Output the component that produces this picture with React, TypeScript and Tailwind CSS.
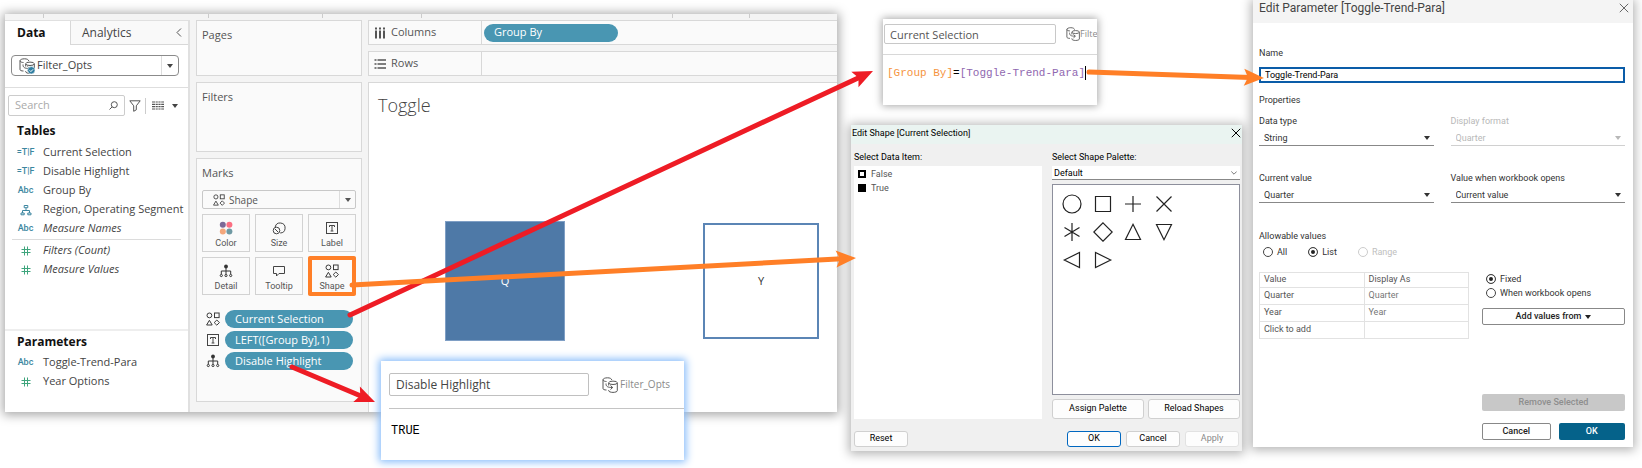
import React from "react";

type IconProps = { className?: string };

const Caret = ({ className = "" }: IconProps) => (
  <svg viewBox="0 0 6 4" className={`h-1 w-1.5 shrink-0 ${className}`} fill="currentColor" aria-hidden="true">
    <path d="M0 0h6L3 4z" />
  </svg>
);

const DataSourceIcon = ({ className = "", checked = false }: IconProps & { checked?: boolean }) => (
  <svg viewBox="0 0 16 16" className={`shrink-0 ${className}`} fill="none" stroke="#555" strokeWidth="1" aria-hidden="true">
    <path d="M4.500 13C2.500 13 1 12.500 1 11.500V2.800C1 1.600 3 .8 5.500.8S9.500 1.600 9.800 3M1 2.800C1.200 4 3 4.500 4.500 4.500" />
    <ellipse cx="11" cy="5.800" rx="4.300" ry="1.700" />
    <path d="M6.700 6v2.500M15.300 6v7.700c0 .9-1.900 1.700-4.300 1.700s-4.300-.8-4.300-1.700V13M4 6.500c0 3 1.500 4 6.500 4M8.500 8.500l2.200 2-2.200 2" />
    {checked && (
      <>
        <circle cx="12.300" cy="12.300" r="3.700" fill="#2f7ea1" stroke="#fff" strokeWidth=".6" />
        <path d="M10.600 12.300l1.300 1.300 2.200-2.300" stroke="#fff" />
      </>
    )}
  </svg>
);

const ShapesIcon = ({ className = "h-3.5 w-3.5" }: IconProps) => (
  <svg viewBox="0 0 14 14" className={`shrink-0 ${className}`} fill="none" stroke="#3a3a3a" strokeWidth="1" aria-hidden="true">
    <circle cx="3.400" cy="3.400" r="2.400" />
    <rect x="8.500" y="1" width="4.600" height="4.600" />
    <path d="M3.400 8.300L6.200 13H.6zM10.800 8l2.600 2.600-2.600 2.600-2.600-2.600z" />
  </svg>
);

const LabelIcon = ({ className = "h-3.5 w-3.5" }: IconProps) => (
  <svg viewBox="0 0 14 14" className={`shrink-0 ${className}`} fill="none" stroke="#444" aria-hidden="true">
    <rect x="1.500" y="1.500" width="11" height="11" strokeWidth="1" />
    <path d="M4.500 6V4.500h5V6M7 4.500v5.500M5.600 10h2.800" strokeWidth="1" />
  </svg>
);

const DetailIcon = ({ className = "h-3.5 w-3.5" }: IconProps) => (
  <svg viewBox="0 0 14 14" className={`shrink-0 ${className}`} fill="none" stroke="#333" aria-hidden="true">
    <circle cx="7" cy="2.500" r="1.900" fill="#333" stroke="none" />
    <path d="M7 4v6M2.300 10V7h9.400v3" />
    <circle cx="2.300" cy="11.500" r="1.100" />
    <circle cx="7" cy="11.500" r="1.100" />
    <circle cx="11.700" cy="11.500" r="1.100" />
  </svg>
);

const ColorIcon = () => (
  <svg viewBox="0 0 14 14" className="h-3.5 w-3.5" aria-hidden="true">
    <circle cx="3.800" cy="3.800" r="3" fill="#7b6a97" />
    <circle cx="10.400" cy="3.800" r="3" fill="#fb6f82" />
    <circle cx="3.800" cy="10.400" r="3" fill="#f4a77c" />
    <circle cx="10.400" cy="10.400" r="3" fill="#6f99a3" />
  </svg>
);

const SizeIcon = () => (
  <svg viewBox="0 0 14 14" className="h-3.5 w-3.5" fill="none" stroke="#444" aria-hidden="true">
    <path d="M3.200 6a5 5 0 1 1 5 6" />
    <circle cx="4.500" cy="9.500" r="3.300" />
    <path d="M3 8l3 3" />
  </svg>
);

const TooltipIcon = () => (
  <svg viewBox="0 0 14 14" className="h-3.5 w-3.5" fill="none" stroke="#444" aria-hidden="true">
    <path d="M1.500 2.500h11v7H7L4.500 12V9.500h-3z" />
  </svg>
);

const HierarchyIcon = () => (
  <svg viewBox="0 0 12 12" className="h-3 w-3" fill="none" stroke="#3c86a0" aria-hidden="true">
    <path d="M4.200 1.500h3.600v2.200H4.200zM6 4v2.500M2.500 9V6.500h7V9M1 9h3.200v1.800H1zM7.800 9H11v1.800H7.800z" />
  </svg>
);

const HashIcon = () => (
  <svg viewBox="0 0 10 10" className="h-2.5 w-2.5" fill="none" stroke="#3fa57d" aria-hidden="true">
    <path d="M3.500.5v9M6.500.5v9M.5 3.500h9M.5 6.500h9" />
  </svg>
);

const CloseIcon = ({ className = "" }: IconProps) => (
  <svg viewBox="0 0 9 9" className={`h-2.5 w-2.5 ${className}`} fill="none" stroke="currentColor" strokeWidth=".9" aria-hidden="true">
    <path d="M.7.7l7.600 7.600M8.300.7L.7 8.300" />
  </svg>
);

type Kind = "bool" | "abc" | "tree" | "num";

const Field = ({ kind, name, italic }: { kind: Kind; name: string; italic?: boolean }) => (
  <li className="flex h-[19px] items-center whitespace-nowrap">
    <span className="flex w-[19px] justify-center font-[Roboto,sans-serif] text-[9px] font-medium text-[#3c86a0]">
      {kind === "bool" && "=T|F"}
      {kind === "abc" && "Abc"}
      {kind === "tree" && <HierarchyIcon />}
      {kind === "num" && <HashIcon />}
    </span>
    <span className={italic ? "ml-2 italic" : "ml-2"}>{name}</span>
  </li>
);

const DataPane = () => (
  <aside className="flex w-[185px] shrink-0 flex-col border-t border-r-2 border-[#e0e0e0] bg-white text-[11px] text-[#444]">
    <div className="flex h-6 text-[12px]">
      <button className="w-[65px] pr-3.5 pl-3 text-left text-[12px] font-bold text-[#111]">Data</button>
      <div className="flex flex-1 items-center justify-between border-b border-l border-[#d8d8d8] bg-[#f9f9f9] pr-1.5 pl-[11px]">
        <button>Analytics</button>
        <button aria-label="Collapse pane">
          <svg viewBox="0 0 6 9" className="h-[9px] w-1.5" fill="none" stroke="#555" aria-hidden="true">
            <path d="M5 .5l-4 4 4 4" />
          </svg>
        </button>
      </div>
    </div>
    <div className="border-b border-[#dedede] px-1.5 pt-2.5 pb-[11px]">
      <button className="flex h-[21px] w-[168px] items-center rounded-sm border border-[#8b8b8b] pl-[7px]">
        <DataSourceIcon checked className="h-4 w-4" />
        <span className="ml-0.5 flex-1 text-left">Filter_Opts</span>
        <span className="flex h-full w-[17px] items-center justify-center border-l border-[#ddd]">
          <Caret />
        </span>
      </button>
    </div>
    <div className="flex items-center pt-[7px] pl-[3px]">
      <label className="flex h-[21px] w-[117px] items-center rounded-xs border border-[#ccc] px-1.5">
        <input aria-label="Search" placeholder="Search" className="w-20 flex-1 outline-none placeholder:text-[#aaa]" />
        <svg viewBox="0 0 9 9" className="h-[9px] w-[9px]" fill="none" stroke="#555" aria-hidden="true">
          <circle cx="5.300" cy="3.700" r="3" />
          <path d="M3.100 5.900L.5 8.500" />
        </svg>
      </label>
      <button aria-label="Filter" className="ml-1">
        <svg viewBox="0 0 12 12" className="h-3 w-3" fill="none" stroke="#555" aria-hidden="true">
          <path d="M.8.8h10.400L7.300 5.800v4L4.700 11.300V5.800z" />
        </svg>
      </button>
      <span className="ml-1 h-4 w-px bg-[#ccc]" />
      <button aria-label="View options" className="flex items-center">
        <svg viewBox="0 0 12 9" className="mx-1.5 h-[9px] w-3" stroke="#555" strokeWidth="1.200" aria-hidden="true">
          <path d="M0 1h12M0 3.300h12M0 5.700h12M0 8h12" strokeDasharray="3 .6 2.200 .6 2.200 .6 2.800" />
        </svg>
        <Caret className="ml-0.5" />
      </button>
    </div>
    <h2 className="mt-1.5 pl-3 text-[12px] leading-[18px] font-bold text-[#111]">Tables</h2>
    <ul className="mt-[3px] pl-[11px]">
      <Field kind="bool" name="Current Selection" />
      <Field kind="bool" name="Disable Highlight" />
      <Field kind="abc" name="Group By" />
      <Field kind="tree" name="Region, Operating Segment" />
      <Field kind="abc" name="Measure Names" italic />
    </ul>
    <div className="mx-[7px] my-px border-t border-[#dcdcdc]" />
    <ul className="pl-[11px]">
      <Field kind="num" name="Filters (Count)" italic />
      <Field kind="num" name="Measure Values" italic />
    </ul>
    <div className="mt-auto border-t-2 border-[#eee] pb-[21px]">
      <h2 className="pt-0.5 pl-3 text-[12px] leading-[18px] font-bold text-[#111]">Parameters</h2>
      <ul className="mt-0.5 pl-[11px]">
        <Field kind="abc" name="Toggle-Trend-Para" />
        <Field kind="num" name="Year Options" />
      </ul>
    </div>
  </aside>
);

const MarkButton = ({ label, icon, highlight }: { label: string; icon: React.ReactNode; highlight?: boolean }) => (
  <button className="relative flex h-[38px] flex-col items-center justify-between border border-[#d2d2d2] bg-[#fafafa] pt-1.5 pb-0.5 font-[Roboto,sans-serif] text-[9px] leading-[11px] text-[#555]">
    {icon}
    <span>{label}</span>
    {highlight && <span className="absolute -inset-x-px -inset-y-0.5 rounded-xs border-4 border-[#ff7f27]" />}
  </button>
);

const Pill = ({ icon, label }: { icon: React.ReactNode; label: string }) => (
  <div className="flex h-[19px] items-center gap-1">
    <span className="flex w-[18px] justify-end">{icon}</span>
    <button className="ml-px h-[18px] flex-1 rounded-full bg-[#4996b2] pl-2.5 text-left text-[11px] font-medium text-white">
      {label}
    </button>
  </div>
);

const MarksColumn = () => (
  <section className="flex w-[166px] shrink-0 flex-col gap-1.5 text-[11px] leading-[14px] text-[#555]">
    <div className="h-14 border border-[#d8d8d8] bg-[#fafafa] px-[5px] py-[7px]">Pages</div>
    <div className="h-[70px] border border-[#d8d8d8] bg-[#fafafa] px-[5px] py-[7px]">Filters</div>
    <div className="mb-2.5 flex-1 border border-[#d8d8d8] bg-[#fafafa] px-[5px] py-[7px]">
      <h3>Marks</h3>
      <button className="mt-2.5 flex h-[19px] w-full items-center rounded-xs border border-[#c8c8c8] pl-2.5">
        <ShapesIcon className="h-3 w-3" />
        <span className="ml-1 flex-1 text-left text-[10px]">Shape</span>
        <span className="flex h-full w-4 items-center justify-center border-l border-[#ddd]">
          <Caret />
        </span>
      </button>
      <div className="mt-[5px] grid grid-cols-3 gap-[5px]">
        <MarkButton label="Color" icon={<ColorIcon />} />
        <MarkButton label="Size" icon={<SizeIcon />} />
        <MarkButton label="Label" icon={<LabelIcon />} />
        <MarkButton label="Detail" icon={<DetailIcon />} />
        <MarkButton label="Tooltip" icon={<TooltipIcon />} />
        <MarkButton label="Shape" icon={<ShapesIcon />} highlight />
      </div>
      <div className="mt-3.5 flex flex-col gap-0.5 pr-[3px]">
        <Pill icon={<ShapesIcon />} label="Current Selection" />
        <Pill icon={<LabelIcon />} label="LEFT([Group By],1)" />
        <Pill icon={<DetailIcon />} label="Disable Highlight" />
      </div>
    </div>
  </section>
);

const Shelf = ({ icon, label, children }: { icon: React.ReactNode; label: string; children?: React.ReactNode }) => (
  <div className="flex h-[25px] border-y border-l border-[#d8d8d8] bg-[#fafafa]">
    <div className="flex w-[113px] items-center gap-[5px] border-r border-[#d8d8d8] pl-[5px] text-[11px] text-[#555]">
      {icon}
      {label}
    </div>
    <div className="flex flex-1 items-center pl-0.5">{children}</div>
  </div>
);

const Worksheet = () => (
  <section className="flex min-w-0 flex-1 flex-col gap-1.5">
    <Shelf
      label="Columns"
      icon={
        <svg viewBox="0 0 12 12" className="h-3 w-3" stroke="#555" strokeWidth="2" aria-hidden="true">
          <path d="M2 .5v2M6 .5v2M10 .5v2M2 3.500v8M6 3.500v8M10 3.500v8" />
        </svg>
      }
    >
      <button className="h-[18px] w-[134px] rounded-full bg-[#4996b2] pl-2.5 text-left text-[11px] font-medium text-white">Group By</button>
    </Shelf>
    <Shelf
      label="Rows"
      icon={
        <svg viewBox="0 0 12 12" className="h-3 w-3" stroke="#555" strokeWidth="1.600" aria-hidden="true">
          <path d="M.5 2h2M.5 6h2M.5 10h2M3.500 2h8.500M3.500 6h8.500M3.500 10h8.500" />
        </svg>
      }
    />
    <div className="flex flex-1 flex-col border-t border-l border-[#d8d8d8] bg-white">
      <h1 className="pt-2.5 pl-[9px] text-[18px] leading-6 font-light text-[#444]">Toggle</h1>
      <div className="mt-[104px] flex items-center justify-between pr-[18px] pl-[76px] text-[11px]">
        <div className="flex h-[120px] w-[120px] items-center justify-center border border-[#7f9fc5] bg-[#4e79a7] text-white">Q</div>
        <div className="flex h-[116px] w-[116px] items-center justify-center border-2 border-[#5b85b5] text-[#333]">Y</div>
      </div>
    </div>
  </section>
);

const CalcCard = () => (
  <div className="absolute top-[347px] left-[376px] h-[99px] w-[303px] bg-white pt-3 pl-2 shadow-[0_0_8px_2px_#85bbfa]">
    <div className="flex items-center">
      <input
        aria-label="Calculation name"
        defaultValue="Disable Highlight"
        className="h-[23px] w-[200px] rounded-xs border border-[#c0c0c0] px-1.5 text-[12px] text-[#444] outline-none"
      />
      <DataSourceIcon className="ml-[13px] h-4 w-4" />
      <span className="ml-0.5 text-[10px] text-[#8a8a8a]">Filter_Opts</span>
    </div>
    <div className="mt-3 border-t border-[#c4c4c4]" />
    <code className="mt-3.5 block pl-0.5 font-['Liberation_Mono',monospace] text-[12px] leading-4 text-black">TRUE</code>
  </div>
);

const Workbook = () => (
  <main className="relative mt-3.5 h-[398px] bg-[#f4f4f4] font-['Open_Sans',sans-serif] shadow-[0_1px_10px_2px_rgba(0,0,0,0.35)]">
    <div className="flex h-full flex-col">
      <div className="flex h-1.5 shrink-0 pl-[38px]">
        <span className="h-1 w-[165px] border-l border-[#ccc]" />
        <span className="h-1 w-[114px] border-l border-[#ccc]" />
        <span className="h-1 w-[99px] border-l border-[#ccc]" />
        <span className="h-1 w-[251px] border-l border-[#ccc]" />
        <span className="h-1 w-[78px] border-x border-[#ccc]" />
      </div>
      <div className="flex min-h-0 flex-1 gap-1.5">
        <DataPane />
        <MarksColumn />
        <Worksheet />
      </div>
    </div>
    <CalcCard />
  </main>
);

const FormulaCard = () => (
  <section className="ml-8 h-[86px] w-[214px] overflow-hidden bg-white font-['Open_Sans',sans-serif] shadow-[0_0_8px_1px_rgba(0,0,0,0.35)]">
    <div className="flex h-[30px] items-center pl-px whitespace-nowrap">
      <input
        aria-label="Field name"
        defaultValue="Current Selection"
        className="h-5 w-[172px] shrink-0 rounded-xs border border-[#c8c8c8] px-[5px] text-[11px] text-[#555] outline-none"
      />
      <DataSourceIcon className="ml-2.5 h-3.5 w-3.5" />
      <span className="text-[9px] text-[#8a8a8a]">Filte</span>
    </div>
    <div className="mt-[5px] border-t border-[#d8d8d8]" />
    <code className="mt-2.5 flex items-center pl-1 font-['Liberation_Mono',monospace] text-[11px] leading-4 whitespace-nowrap">
      <span className="text-[#f59440]">[Group By]</span>
      <span className="text-black">=</span>
      <span className="text-[#9068b0]">[Toggle-Trend-Para]</span>
      <span className="h-3.5 w-px bg-black" />
    </code>
  </section>
);

const paletteShapes = [
  { name: "Circle", d: "M10 1a9 9 0 1 0 0 18a9 9 0 1 0 0-18z" },
  { name: "Square", d: "M2.500 2.500h15v15h-15z" },
  { name: "Plus", d: "M10 2v16M2 10h16" },
  { name: "Cross", d: "M2.500 2.500l15 15M17.500 2.500l-15 15" },
  { name: "Asterisk", d: "M10 1v18M2.500 5.500l15 9M17.500 5.500l-15 9" },
  { name: "Diamond", d: "M10 .8L19.200 10 10 19.200.8 10z" },
  { name: "Triangle up", d: "M10 2.300L17.500 17.500h-15z" },
  { name: "Triangle down", d: "M10 17.700L2.500 2.500h15z" },
  { name: "Triangle left", d: "M2.300 10l15.200-7.500v15z" },
  { name: "Triangle right", d: "M17.700 10L2.500 2.500v15z" },
];

const DialogButton = ({ children, className }: { children: string; className: string }) => (
  <button className={`rounded-[3px] border bg-[#fdfdfd] ${className}`}>{children}</button>
);

const ShapeDialog = () => (
  <section className="flex h-[326px] flex-col bg-[#f0f0f0] text-[9px] text-black shadow-[0_1px_10px_2px_rgba(0,0,0,0.3)]">
    <header className="flex h-[19px] items-start justify-between bg-[#eaf4f1] pr-px pl-px leading-4">
      <h2>Edit Shape [Current Selection]</h2>
      <button aria-label="Close" className="pt-[3px]">
        <CloseIcon />
      </button>
    </header>
    <div className="flex flex-1 gap-2.5 pr-0.5 pl-[3px]">
      <div className="flex flex-1 flex-col">
        <h3 className="pt-[7px] pb-[3px] leading-3">Select Data Item:</h3>
        <ul className="flex-1 bg-white pt-px pl-1 leading-[14px] text-[#555]">
          <li className="flex items-center gap-[5px]">
            <span className="h-2 w-2 border-2 border-black" />
            False
          </li>
          <li className="flex items-center gap-[5px]">
            <span className="h-2 w-2 bg-black" />
            True
          </li>
        </ul>
      </div>
      <div className="flex flex-1 flex-col">
        <label htmlFor="palette" className="pt-[7px] pb-[3px] leading-3">
          Select Shape Palette:
        </label>
        <div className="relative flex h-3.5">
          <select id="palette" className="w-full appearance-none border-b border-[#888] bg-white px-0.5 leading-3 outline-none">
            <option>Default</option>
          </select>
          <svg viewBox="0 0 6 4" className="absolute top-[5px] right-[3px] h-1 w-1.5" fill="none" stroke="#555" strokeWidth=".8" aria-hidden="true">
            <path d="M.3.5L3 3.200 5.700.5" />
          </svg>
        </div>
        <div className="mt-1 flex-1 border border-[#8d8f9c] bg-white pt-[9px] pl-[9px]">
          <div className="grid w-[122px] grid-cols-4 gap-y-2">
            {paletteShapes.map((s) => (
              <button key={s.name} aria-label={s.name} className="h-5">
                <svg viewBox="0 0 20 20" className="h-5 w-5" fill="none" stroke="#222" strokeWidth="1.200" aria-hidden="true">
                  <path d={s.d} />
                </svg>
              </button>
            ))}
          </div>
        </div>
        <div className="mt-1 flex h-5 gap-1">
          <DialogButton className="flex-1 border-[#d0d0d0]">Assign Palette</DialogButton>
          <DialogButton className="flex-1 border-[#d0d0d0]">Reload Shapes</DialogButton>
        </div>
      </div>
    </div>
    <footer className="flex h-8 items-end gap-[5px] pr-[3px] pb-1 pl-[3px]">
      <DialogButton className="mr-auto h-4 w-[54px] border-[#d0d0d0]">Reset</DialogButton>
      <DialogButton className="h-4 w-[54px] border-[#0067c0]">OK</DialogButton>
      <DialogButton className="h-4 w-[54px] border-[#d0d0d0]">Cancel</DialogButton>
      <DialogButton className="h-4 w-[54px] border-[#e2e2e2] text-[#8a8a8a]">Apply</DialogButton>
    </footer>
  </section>
);

const LabeledSelect = ({ id, label, value, disabled }: { id: string; label: string; value: string; disabled?: boolean }) => (
  <div className={disabled ? "text-[#b8b8b8]" : "text-[#333]"}>
    <label htmlFor={id} className="block leading-3">
      {label}
    </label>
    <div className="relative mt-[3px]">
      <select
        id={id}
        disabled={disabled}
        className={`block h-4 w-full appearance-none border-b px-[5px] leading-3 outline-none disabled:opacity-100 ${disabled ? "border-[#d0d0d0]" : "border-[#888]"}`}
      >
        <option>{value}</option>
      </select>
      <Caret className="absolute top-1.5 right-1" />
    </div>
  </div>
);

const Radio = ({ name, label, checked, disabled }: { name: string; label: string; checked?: boolean; disabled?: boolean }) => (
  <label className={`flex items-center gap-1 leading-[14px] ${disabled ? "text-[#c0c0c0]" : "text-[#333]"}`}>
    <input
      type="radio"
      name={name}
      defaultChecked={checked}
      disabled={disabled}
      className="h-2.5 w-2.5 appearance-none rounded-full border border-[#444] checked:bg-[#222] checked:shadow-[inset_0_0_0_2px_#fff] disabled:border-[#ccc]"
    />
    {label}
  </label>
);

const rows = [
  { value: "Quarter", display: "Quarter" },
  { value: "Year", display: "Year" },
  { value: "Click to add", display: "" },
];

const ParameterDialog = () => (
  <section className="flex h-[447px] flex-col bg-white text-[9px] text-[#333] shadow-[0_1px_10px_2px_rgba(0,0,0,0.3)]">
    <header className="flex h-[23px] items-start justify-between bg-[#f4f4f4] pr-1 pl-1.5 text-[12px] leading-4 text-[#444]">
      <h2>Edit Parameter [Toggle-Trend-Para]</h2>
      <button aria-label="Close" className="pt-[3px] text-[#666]">
        <CloseIcon />
      </button>
    </header>
    <div className="flex flex-1 flex-col pr-2 pb-[7px] pl-1.5">
      <label htmlFor="name" className="mt-6 leading-3">
        Name
      </label>
      <input id="name" defaultValue="Toggle-Trend-Para" className="mt-2 h-4 border-2 border-[#0a5ca8] px-1 text-black outline-none" />
      <h3 className="mt-[11px] leading-3">Properties</h3>
      <div className="mt-[9px] grid grid-cols-2 gap-x-[17px] gap-y-[26px]">
        <LabeledSelect id="type" label="Data type" value="String" />
        <LabeledSelect id="format" label="Display format" value="Quarter" disabled />
        <LabeledSelect id="current" label="Current value" value="Quarter" />
        <LabeledSelect id="opens" label="Value when workbook opens" value="Current value" />
      </div>
      <fieldset className="mt-[27px]">
        <legend className="leading-3">Allowable values</legend>
        <div className="mt-[3px] flex gap-[21px] pl-1">
          <Radio name="allow" label="All" />
          <Radio name="allow" label="List" checked />
          <Radio name="allow" label="Range" disabled />
        </div>
      </fieldset>
      <div className="mt-[13px] flex flex-1 gap-[13px]">
        <table className="h-[67px] w-[210px] table-fixed self-start border-collapse text-left text-[#555]">
          <thead>
            <tr className="border-b border-[#ccc]">
              <th className="border border-[#e2e2e2] px-1 font-normal">Value</th>
              <th className="border border-[#e2e2e2] px-1 font-normal">Display As</th>
            </tr>
          </thead>
          <tbody>
            {rows.map((r) => (
              <tr key={r.value}>
                <td className="border border-[#e2e2e2] px-1">{r.value}</td>
                <td className="border border-[#e2e2e2] px-1 text-[#777]">{r.display}</td>
              </tr>
            ))}
          </tbody>
        </table>
        <div className="flex flex-1 flex-col">
          <div className="pl-1">
            <Radio name="refresh" label="Fixed" checked />
            <Radio name="refresh" label="When workbook opens" />
          </div>
          <button className="mt-2 flex h-[17px] items-center justify-center gap-1 rounded-xs border border-[#888] font-medium text-[#222]">
            Add values from <Caret />
          </button>
          <button disabled className="mt-auto h-[17px] rounded-xs bg-[#c8c8c8] font-medium text-[#8e8e8e]">
            Remove Selected
          </button>
          <div className="mt-3 flex h-[17px] gap-2 font-medium">
            <button className="flex-1 rounded-xs border border-[#888] text-[#222]">Cancel</button>
            <button className="flex-1 rounded-xs bg-[#05628a] text-white">OK</button>
          </div>
        </div>
      </div>
    </div>
  </section>
);

const arrows = [
  { from: [350, 315], to: [873, 71], color: "#ee1c25" },
  { from: [292, 367], to: [375, 402], color: "#ee1c25" },
  { from: [352, 285], to: [856, 258], color: "#ff7f27" },
  { from: [1089, 72], to: [1264, 78], color: "#ff7f27" },
];

const Arrows = () => (
  <svg
    viewBox="0 0 1642 468"
    preserveAspectRatio="none"
    className="pointer-events-none absolute inset-x-0 top-0 h-[468px] w-full"
    aria-hidden="true"
  >
    {arrows.map(({ from: [x1, y1], to: [x2, y2], color }) => {
      const length = Math.hypot(x2 - x1, y2 - y1);
      const angle = (Math.atan2(y2 - y1, x2 - x1) * 180) / Math.PI;
      return (
        <g key={`${x1}-${y1}`} transform={`translate(${x1} ${y1}) rotate(${angle})`} fill={color} stroke={color}>
          <path d={`M0 0H${length - 14}`} strokeWidth="5" strokeLinecap="round" />
          <path d={`M${length} 0L${length - 20} 8.500L${length - 16} 0L${length - 20} -8.500z`} stroke="none" />
        </g>
      );
    })}
  </svg>
);

export default function App() {
  return (
    <div className="relative min-h-[468px] overflow-hidden bg-white font-[Roboto,'Liberation_Sans',sans-serif]">
      <div className="grid grid-cols-[832fr_405fr_391fr] items-start pr-[9px] pl-[5px]">
        <div className="min-w-0">
          <Workbook />
        </div>
        <div className="min-w-0 pt-[19px] pl-3.5">
          <FormulaCard />
          <div className="mt-5">
            <ShapeDialog />
          </div>
        </div>
        <div className="min-w-0 pl-[11px]">
          <ParameterDialog />
        </div>
      </div>
      <Arrows />
    </div>
  );
}
